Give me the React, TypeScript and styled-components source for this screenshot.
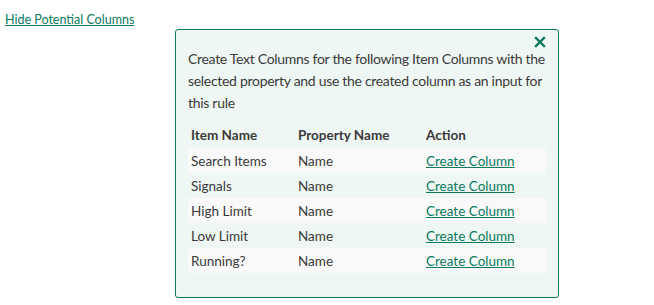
import React from 'react';
import styled, { createGlobalStyle } from 'styled-components';

const GlobalStyle = createGlobalStyle`
  body {
    margin: 0;
    background: #ffffff;
    font-family: Lato, "Noto Sans", sans-serif;
    color: #3a3a3a;
  }
`;

const rows = ['Search Items', 'Signals', 'High Limit', 'Low Limit', 'Running?'];

export default function App() {
  return (
    <Page>
      <GlobalStyle />
      <ToggleLink href="#">Hide Potential Columns</ToggleLink>
      <Panel>
        <CloseRow>
          <CloseIcon viewBox="0 0 12 12" aria-label="close">
            <path d="M2 2 L10 10 M10 2 L2 10" stroke="#0b7a5e" strokeWidth="2.4" strokeLinecap="square" />
          </CloseIcon>
        </CloseRow>
        <Intro>
          Create Text Columns for the following Item Columns with the selected property and use the
          created column as an input for this rule
        </Intro>
        <Table>
          <thead>
            <tr>
              <HeadCell>Item Name</HeadCell>
              <HeadCell>Property Name</HeadCell>
              <HeadCell>Action</HeadCell>
            </tr>
          </thead>
          <tbody>
            {rows.map((name, i) => (
              <Row key={name} $striped={i % 2 === 0}>
                <Cell>{name}</Cell>
                <Cell>Name</Cell>
                <Cell>
                  <ActionLink href="#">Create Column</ActionLink>
                </Cell>
              </Row>
            ))}
          </tbody>
        </Table>
      </Panel>
    </Page>
  );
}

const Page = styled.div`
  display: flex;
  flex-direction: column;
  padding: 12px 0 0 5px;
  width: 654px;
  height: 305px;
  box-sizing: border-box;
`;

const ToggleLink = styled.a`
  align-self: flex-start;
  font-size: 12.5px;
  line-height: 16px;
  color: #0b7a5e;
  text-decoration: underline;
`;

const Panel = styled.div`
  margin: 1px 0 0 170px;
  width: 384px;
  height: 269px;
  box-sizing: border-box;
  border: 1px solid #0f7a5c;
  border-radius: 3px;
  background: #eff7f4;
  padding: 6px 12px 0 12px;
  display: flex;
  flex-direction: column;
`;

const CloseRow = styled.div`
  display: flex;
  justify-content: flex-end;
  height: 12px;
`;

const CloseIcon = styled.svg`
  width: 12px;
  height: 12px;
`;

const Intro = styled.p`
  margin: 0;
  font-size: 14px;
  line-height: 22px;
  letter-spacing: -0.3px;
  color: #3a3a3a;
`;

const Table = styled.table`
  margin-top: 8px;
  width: 358px;
  border-collapse: collapse;
  table-layout: fixed;
  font-size: 13.5px;
`;

const HeadCell = styled.th`
  text-align: left;
  font-weight: 700;
  height: 26px;
  padding: 0 3px;
  color: #3a3a3a;

  &:nth-child(1) { width: 101px; }
  &:nth-child(2) { width: 122px; }
`;

const Row = styled.tr<{ $striped: boolean }>`
  background: ${(p) => (p.$striped ? '#f9f9f9' : 'transparent')};
`;

const Cell = styled.td`
  height: 25px;
  padding: 0 3px;
  color: #3a3a3a;
`;

const ActionLink = styled.a`
  color: #0b7a5e;
  text-decoration: underline;
`;
